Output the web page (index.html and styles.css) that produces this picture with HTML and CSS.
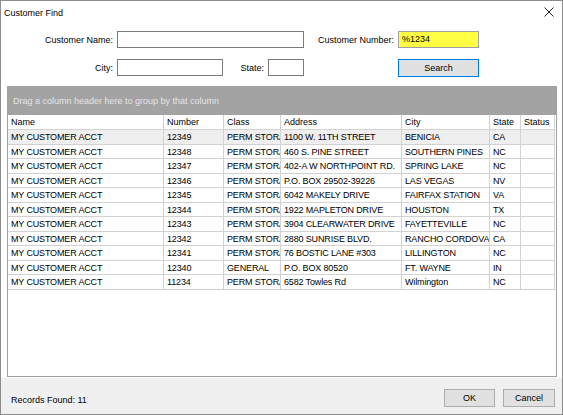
FILE: index.html
```html
<!DOCTYPE html>
<html>
<head>
<meta charset="utf-8">
<link rel="stylesheet" href="styles.css">
</head>
<body>
<div class="window">
  <div class="titlebar">
    <span class="title">Customer Find</span>
    <svg class="close" width="10" height="10" viewBox="0 0 10 10"><path d="M0.5 0.5 L9.5 9.5 M9.5 0.5 L0.5 9.5" stroke="#222" stroke-width="1" fill="none"/></svg>
  </div>
  <div class="form">
    <div class="frow">
      <label class="lbl w-name">Customer Name:</label>
      <div class="inp w-cname"></div>
      <label class="lbl w-cnum">Customer Number:</label>
      <div class="inp yellow w-cnumin">%1234</div>
    </div>
    <div class="frow">
      <label class="lbl w-name">City:</label>
      <div class="inp w-city"></div>
      <label class="lbl w-state">State:</label>
      <div class="inp w-statein"></div>
      <div class="spacer"></div>
      <div class="btn search">Search</div>
    </div>
  </div>
  <div class="gridbox">
    <div class="grouppanel">Drag a column header here to group by that column</div>
    <div class="row head">
      <div class="c">Name</div><div class="c">Number</div><div class="c">Class</div><div class="c">Address</div><div class="c">City</div><div class="c">State</div><div class="c">Status</div>
    </div>
    <div class="row sel">
      <div class="c">MY CUSTOMER ACCT</div><div class="c">12349</div><div class="c">PERM STORAGE</div><div class="c">1100 W. 11TH STREET</div><div class="c">BENICIA</div><div class="c">CA</div><div class="c"></div>
    </div>
    <div class="row">
      <div class="c">MY CUSTOMER ACCT</div><div class="c">12348</div><div class="c">PERM STORAGE</div><div class="c">460 S. PINE STREET</div><div class="c">SOUTHERN PINES</div><div class="c">NC</div><div class="c"></div>
    </div>
    <div class="row">
      <div class="c">MY CUSTOMER ACCT</div><div class="c">12347</div><div class="c">PERM STORAGE</div><div class="c">402-A W NORTHPOINT RD.</div><div class="c">SPRING LAKE</div><div class="c">NC</div><div class="c"></div>
    </div>
    <div class="row">
      <div class="c">MY CUSTOMER ACCT</div><div class="c">12346</div><div class="c">PERM STORAGE</div><div class="c">P.O. BOX 29502-39226</div><div class="c">LAS VEGAS</div><div class="c">NV</div><div class="c"></div>
    </div>
    <div class="row">
      <div class="c">MY CUSTOMER ACCT</div><div class="c">12345</div><div class="c">PERM STORAGE</div><div class="c">6042 MAKELY DRIVE</div><div class="c">FAIRFAX STATION</div><div class="c">VA</div><div class="c"></div>
    </div>
    <div class="row">
      <div class="c">MY CUSTOMER ACCT</div><div class="c">12344</div><div class="c">PERM STORAGE</div><div class="c">1922 MAPLETON DRIVE</div><div class="c">HOUSTON</div><div class="c">TX</div><div class="c"></div>
    </div>
    <div class="row">
      <div class="c">MY CUSTOMER ACCT</div><div class="c">12343</div><div class="c">PERM STORAGE</div><div class="c">3904 CLEARWATER DRIVE</div><div class="c">FAYETTEVILLE</div><div class="c">NC</div><div class="c"></div>
    </div>
    <div class="row">
      <div class="c">MY CUSTOMER ACCT</div><div class="c">12342</div><div class="c">PERM STORAGE</div><div class="c">2880 SUNRISE BLVD.</div><div class="c">RANCHO CORDOVA</div><div class="c">CA</div><div class="c"></div>
    </div>
    <div class="row">
      <div class="c">MY CUSTOMER ACCT</div><div class="c">12341</div><div class="c">PERM STORAGE</div><div class="c">76 BOSTIC LANE #303</div><div class="c">LILLINGTON</div><div class="c">NC</div><div class="c"></div>
    </div>
    <div class="row">
      <div class="c">MY CUSTOMER ACCT</div><div class="c">12340</div><div class="c">GENERAL</div><div class="c">P.O. BOX 80520</div><div class="c">FT. WAYNE</div><div class="c">IN</div><div class="c"></div>
    </div>
    <div class="row">
      <div class="c">MY CUSTOMER ACCT</div><div class="c">11234</div><div class="c">PERM STORAGE</div><div class="c">6582 Towles Rd</div><div class="c">Wilmington</div><div class="c">NC</div><div class="c"></div>
    </div>
  </div>
  <div class="footer">
    <span class="records">Records Found: 11</span>
    <div class="btns">
      <div class="btn ok">OK</div>
      <div class="btn cancel">Cancel</div>
    </div>
  </div>
</div>
</body>
</html>
```

FILE: styles.css
```css
* { box-sizing: border-box; }
html, body { margin: 0; padding: 0; }
body {
  width: 563px;
  height: 415px;
  overflow: hidden;
  font-family: "Liberation Sans", Arial, sans-serif;
  font-size: 9px;
  color: #000;
  background: #fff;
}
.window {
  width: 563px;
  height: 415px;
  border: 1px solid #8c8c8c;
  display: flex;
  flex-direction: column;
  background: #fff;
}
.titlebar {
  height: 21px;
  flex: none;
  display: flex;
  align-items: center;
  justify-content: space-between;
  padding: 2px 8px 0 3px;
}
.title { font-size: 9px; color: #000; }
.close { display: block; margin-bottom: 1px; }
.form {
  flex: none;
  padding-top: 9px;
  display: flex;
  flex-direction: column;
  gap: 11px;
}
.frow {
  display: flex;
  align-items: center;
  height: 17px;
}
.lbl {
  text-align: right;
  padding-right: 4px;
  white-space: nowrap;
}
.w-name { width: 116px; }
.w-cname { width: 187px; }
.w-cnum { width: 94px; }
.w-cnumin { width: 81px; }
.w-city { width: 106px; }
.w-state { width: 45px; }
.w-statein { width: 36px; }
.spacer { width: 94px; }
.inp {
  height: 17px;
  border: 1px solid #7a7a7a;
  background: #fff;
  padding: 0 3px;
  line-height: 15px;
}
.yellow {
  background: #ffff44;
  border-color: #a0a0a0;
}
.btn {
  height: 18px;
  background: #e1e1e1;
  border: 1px solid #adadad;
  text-align: center;
  line-height: 16px;
}
.search {
  width: 81px;
  border-color: #0078d7;
  box-shadow: inset 0 0 0 1px #cfe4f7;
}
.gridbox {
  flex: 1;
  margin: 10px 5px 1px 6px;
  border: 1px solid #a0a0a0;
  background: #fff;
  display: flex;
  flex-direction: column;
}
.grouppanel {
  height: 28px;
  flex: none;
  background: #a3a3a3;
  color: #e4e4e4;
  padding-left: 5px;
  line-height: 28px;
}
.row {
  display: grid;
  grid-template-columns: 156px 60px 57px 121px 88px 31px 34px;
  width: 547px;
  height: 14.5px;
  flex: none;
  border-bottom: 1px solid #d2d2d2;
}
.row.head { height: 15px; }
.row.sel { background: #efefef; }
.c {
  border-right: 1px solid #d2d2d2;
  padding-left: 3px;
  white-space: nowrap;
  overflow: hidden;
  text-overflow: clip;
  line-height: 14px;
  letter-spacing: -0.15px;
}
.head .c { line-height: 14px; letter-spacing: 0; }
.footer {
  height: 36px;
  flex: none;
  background: #f0f0f0;
  display: flex;
  align-items: flex-start;
  justify-content: space-between;
  padding: 11px 7px 0 10px;
}
.records { line-height: 18px; padding-top: 2px; }
.btns { display: flex; gap: 8px; }
.ok { width: 51px; }
.cancel { width: 52px; }
```
